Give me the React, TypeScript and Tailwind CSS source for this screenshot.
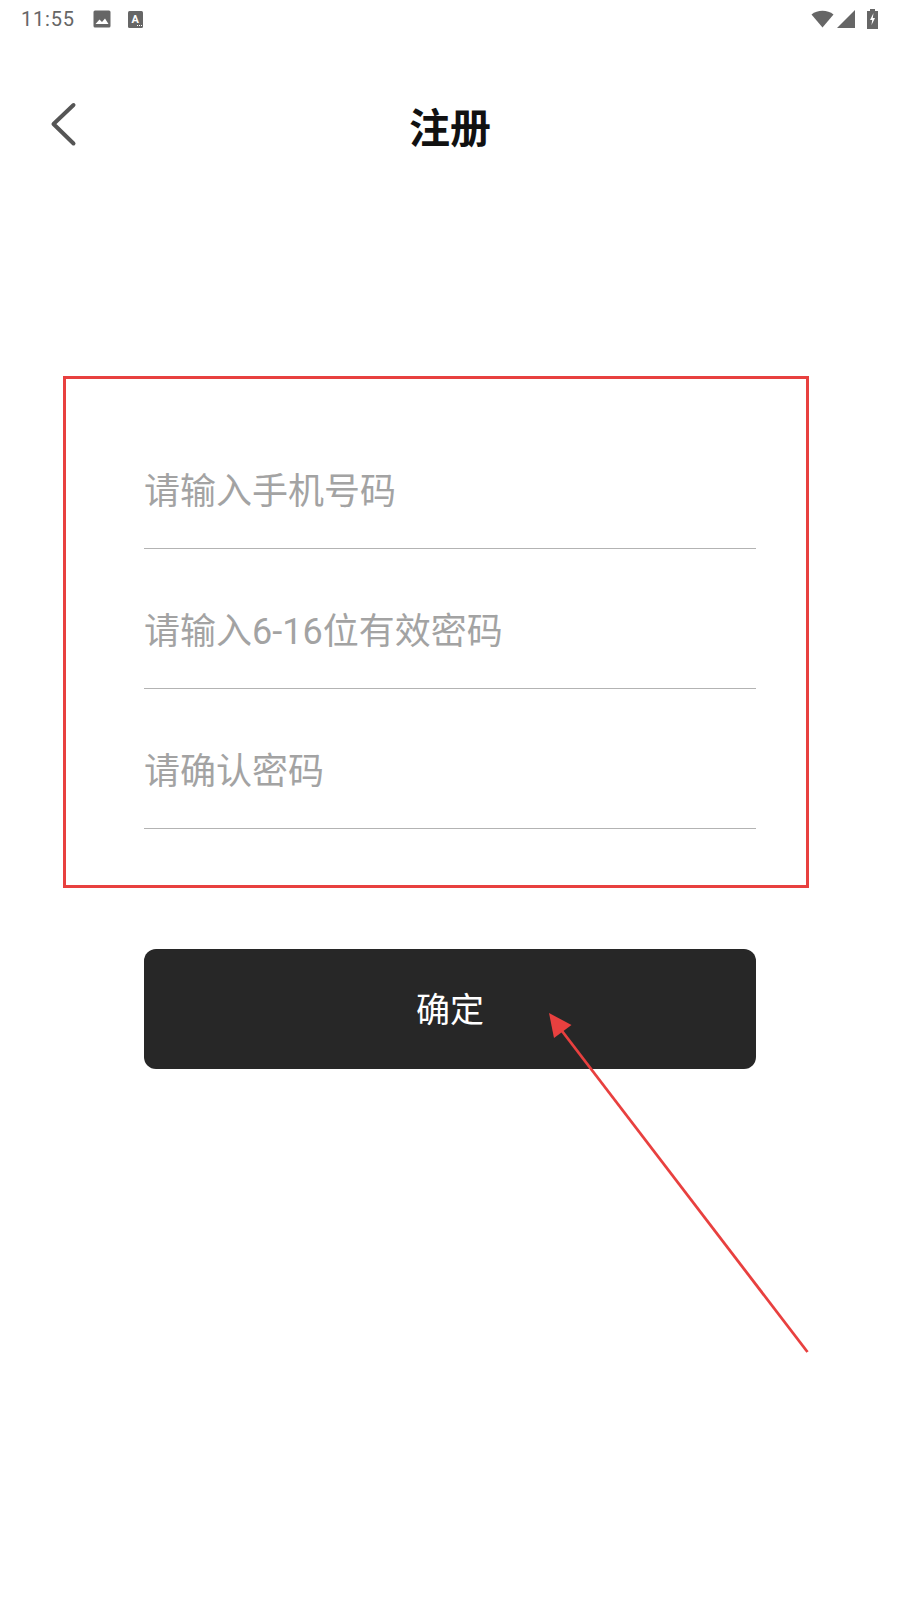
const FONT = "font-['Roboto','Noto_Sans_CJK_SC',sans-serif]"

function Field({ placeholder }: { placeholder: string }): React.JSX.Element {
  return (
    <div className="h-[140px] border-b-[1.5px] border-[#b3b3b3]">
      <input
        readOnly
        placeholder={placeholder}
        className="h-[138px] w-full bg-transparent pt-[28px] text-[36px] outline-none placeholder:text-[#a3a3a3]"
      />
    </div>
  )
}

function StatusBar(): React.JSX.Element {
  return (
    <div className="flex h-[38px] items-center text-[#666666]">
      <span className="ml-[21px] text-[20px] leading-none tracking-[0.8px]">11:55</span>
      <svg className="ml-[18px]" width="18" height="18" viewBox="0 0 18 18">
        <rect x="0.5" y="0.5" width="17" height="17" rx="1.5" fill="#666666" />
        <path d="M2.5 14 L6.5 9.5 L9 12 L12 8.5 L15.5 14 Z" fill="#ffffff" />
      </svg>
      <svg className="ml-[17px]" width="15" height="17" viewBox="0 0 15 17">
        <rect width="15" height="17" rx="1.5" fill="#666666" />
        <text x="7.2" y="11.5" textAnchor="middle" fontSize="11" fontWeight="700" fill="#ffffff" fontFamily="Roboto">A</text>
        <path d="M9 14.5h1M11 14.5h1M13 14.5h1" stroke="#ffffff" strokeWidth="1" />
      </svg>
      <div className="ml-auto mr-[22px] flex items-center">
        <svg width="23" height="18" viewBox="0 0 23 18">
          <path d="M0.5 4.5 C6.5 -0.5 16.5 -0.5 22.5 4.5 L11.5 17.5 Z" fill="#666666" />
        </svg>
        <svg className="ml-[3px]" width="19" height="18" viewBox="0 0 19 18">
          <path d="M0 18 L18 0 L18 18 Z" fill="#666666" />
        </svg>
        <svg className="ml-[11px]" width="11" height="20" viewBox="0 0 11 20">
          <path d="M3 0h5v2h3v18H0V2h3z" fill="#666666" />
          <path d="M6.5 4 L3 11 H5.2 L4.5 16 L8 9 H5.8 Z" fill="#ffffff" />
        </svg>
      </div>
    </div>
  )
}

export default function App(): React.JSX.Element {
  return (
    <div className={`relative h-[1600px] w-[900px] overflow-hidden bg-white ${FONT}`}>
      <StatusBar />

      <header className="relative mt-[62px] flex h-[60px] items-center justify-center">
        <svg className="absolute left-[47px] top-[-1px]" width="32" height="50" viewBox="0 0 32 50">
          <path d="M26.5 6 L6.5 25 L26.5 44.5" fill="none" stroke="#555555" strokeWidth="4" strokeLinecap="round" strokeLinejoin="round" />
        </svg>
        <h1 className="mb-[2px] text-[41px] font-bold leading-none text-[#111111]">注册</h1>
      </header>

      <form className="mx-[144px] mt-[249px]">
        <Field placeholder="请输入手机号码" />
        <Field placeholder="请输入6-16位有效密码" />
        <Field placeholder="请确认密码" />
        <button
          type="button"
          className="mt-[120px] flex h-[120px] w-full items-center justify-center rounded-xl bg-[#272727] pt-[2px] text-[34px] text-white"
        >
          确定
        </button>
      </form>

      {/* annotation overlays */}
      <div className="absolute left-[63px] top-[376px] h-[512px] w-[746px] border-[3px] border-[#e8403f]" />
      <svg className="absolute left-0 top-0" width="900" height="1600" viewBox="0 0 900 1600">
        <path d="M807.5 1352 L562 1031" stroke="#e8403f" strokeWidth="2.8" fill="none" />
        <path d="M549 1013 L571.5 1025 L554 1038 Z" fill="#e8403f" />
      </svg>
    </div>
  )
}
